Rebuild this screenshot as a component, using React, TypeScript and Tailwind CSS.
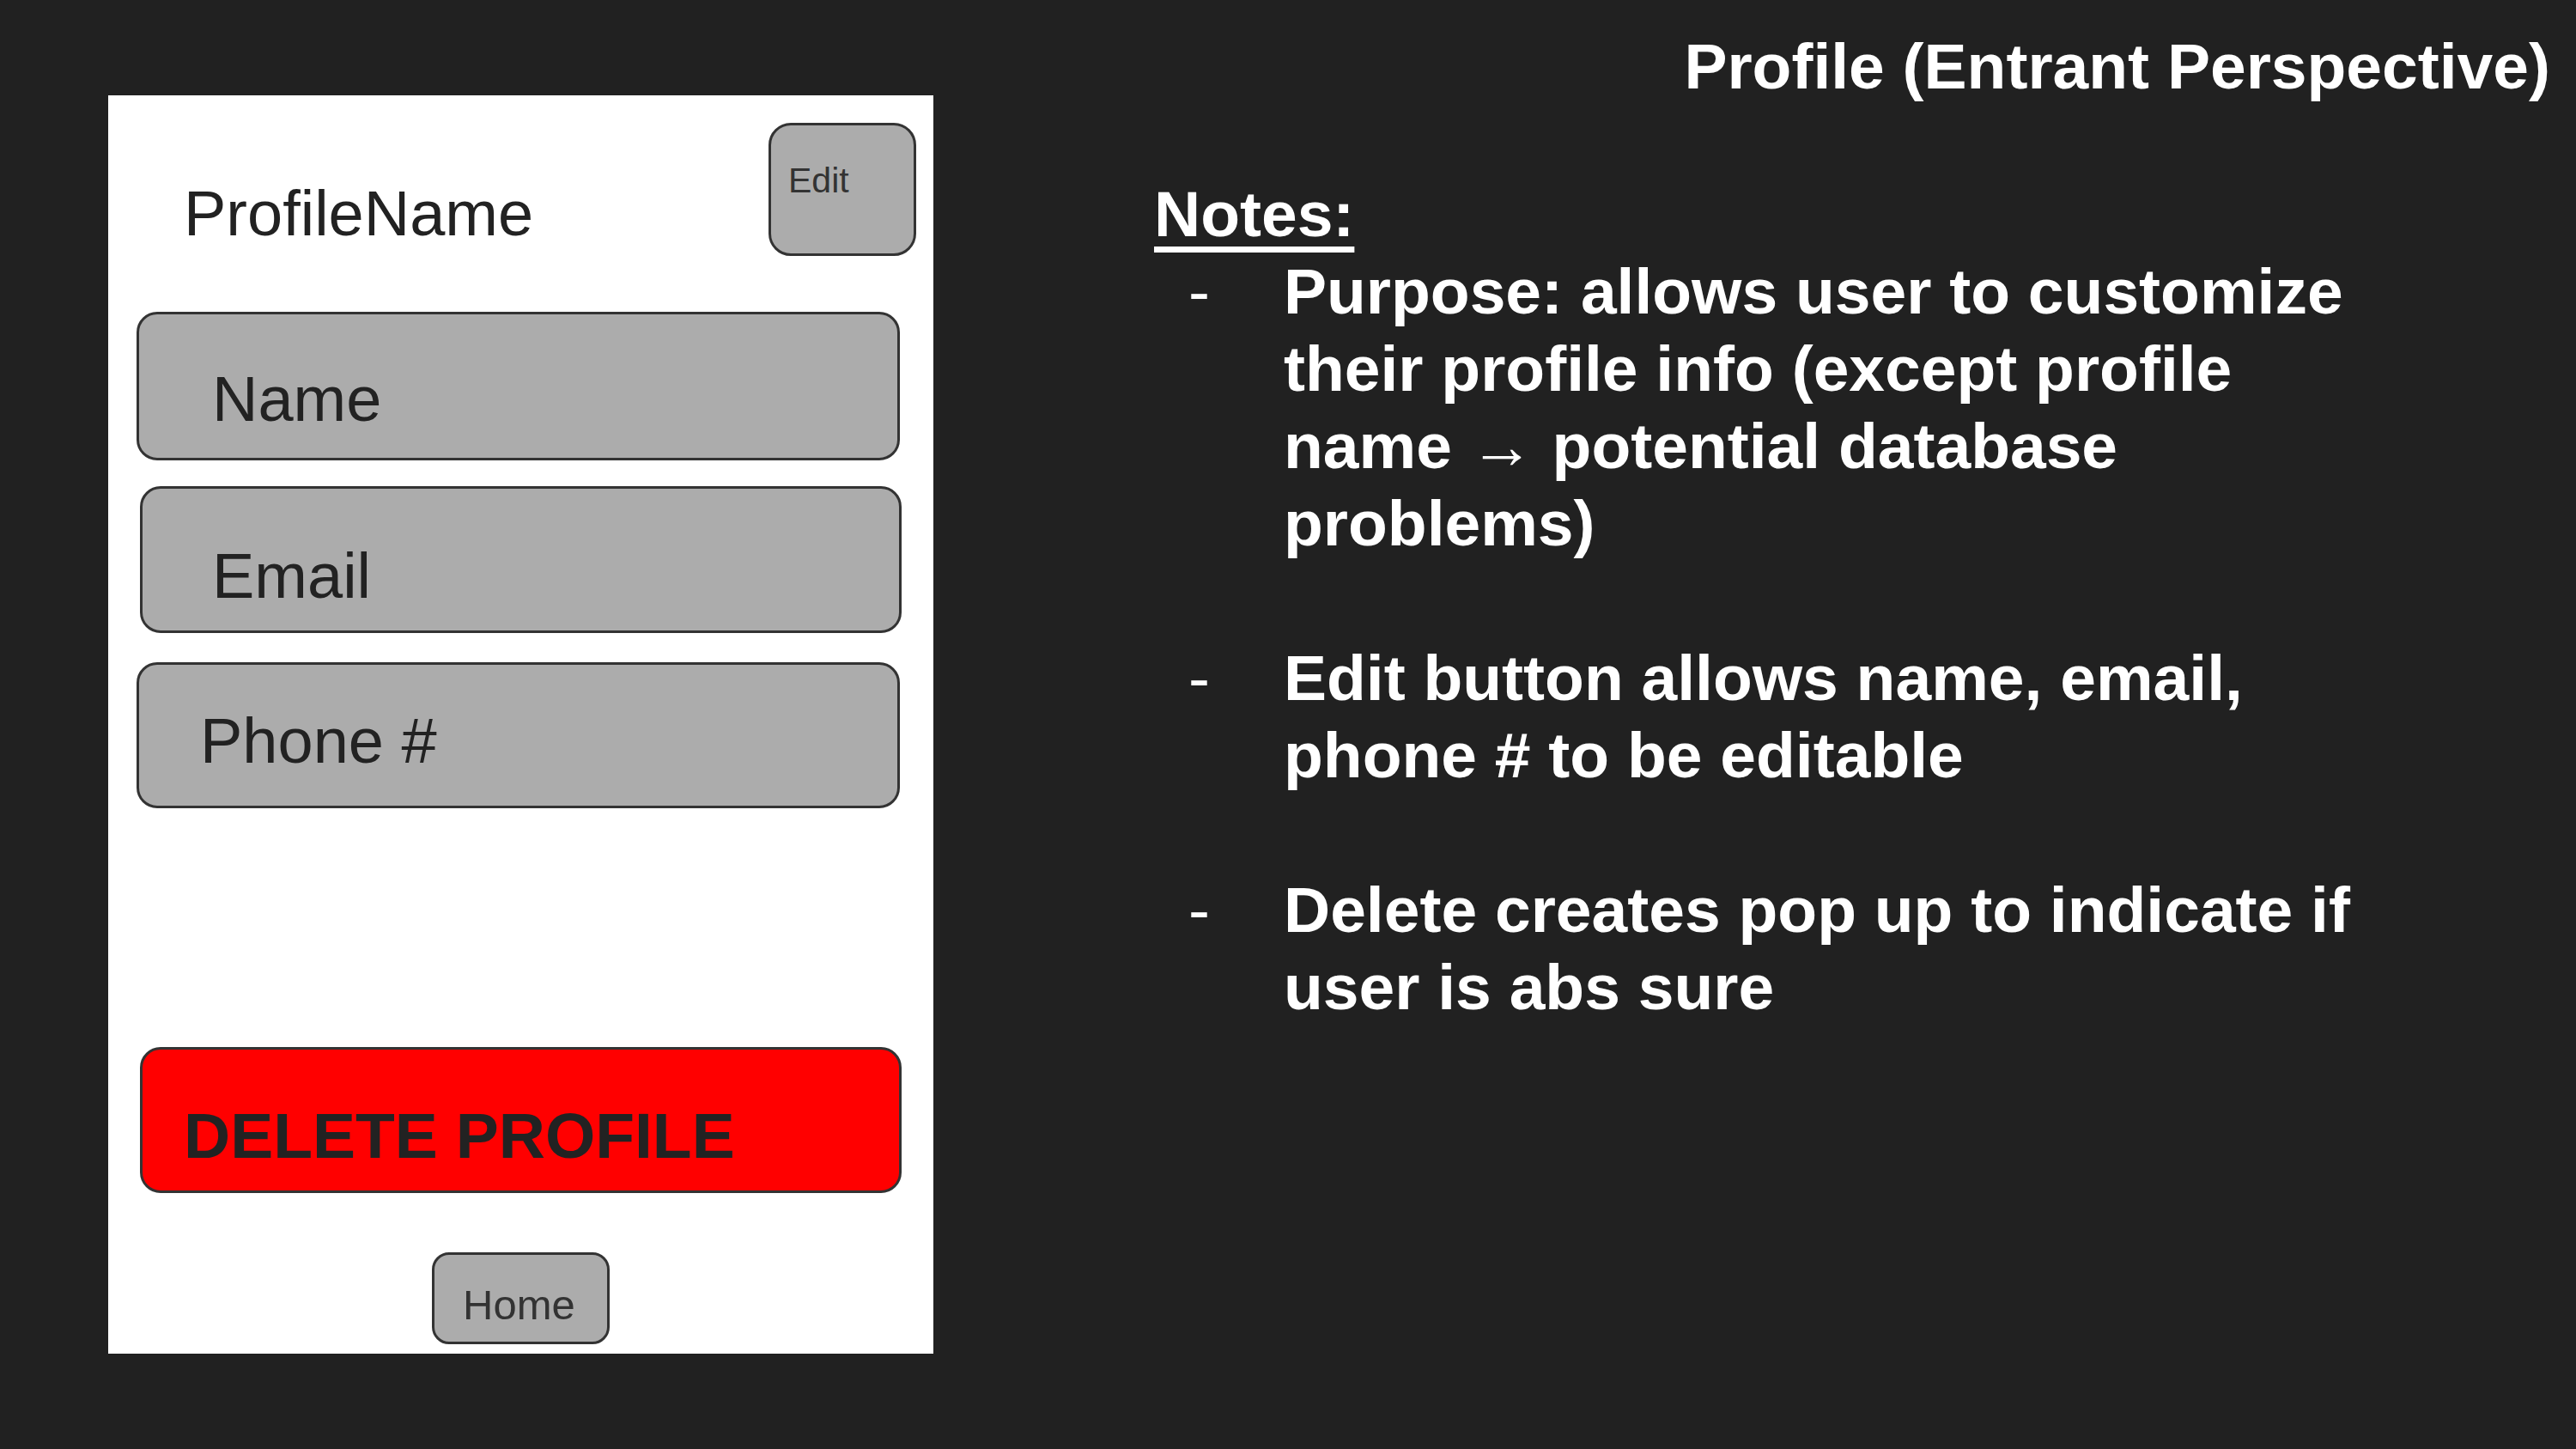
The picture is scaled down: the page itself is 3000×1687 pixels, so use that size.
import React from "react";

const font = { fontFamily: '"Liberation Sans", Arial, Helvetica, sans-serif' };

function Bullet({ lines }: { lines: string[] }) {
  return (
    <div className="flex text-[75px] leading-[90px]">
      <div className="w-[151px] shrink-0 pl-[40px] font-normal">-</div>
      <div className="font-bold">
        {lines.map((l, i) => (
          <div key={i}>{l}</div>
        ))}
      </div>
    </div>
  );
}

export default function App() {
  return (
    <div className="w-[3000px] h-[1687px] bg-[#212121] flex overflow-hidden" style={font}>
      {/* Phone mockup */}
      <div className="ml-[126px] mt-[111px] w-[961px] h-[1465px] bg-white flex flex-col shrink-0 text-[#222222]">
        <div className="flex items-start pt-[32px]">
          <div className="ml-[88px] mt-[69px] text-[74px] leading-[74px]">ProfileName</div>
          <div className="ml-auto mr-[20px] w-[172px] h-[155px] bg-[#acacac] border-[3px] border-[#333333] rounded-[26px] pl-[20px] pt-[44px] text-[41px] leading-[41px] text-[#333333]">
            Edit
          </div>
        </div>
        <div className="mt-[65px] ml-[33px] w-[889px] h-[173px] bg-[#acacac] border-[3px] border-[#333333] rounded-[24px] pl-[85px] pt-[62px] text-[74px] leading-[74px]">
          Name
        </div>
        <div className="mt-[30px] ml-[37px] w-[887px] h-[171px] bg-[#acacac] border-[3px] border-[#333333] rounded-[24px] pl-[81px] pt-[65px] text-[74px] leading-[74px]">
          Email
        </div>
        <div className="mt-[34px] ml-[33px] w-[889px] h-[170px] bg-[#acacac] border-[3px] border-[#333333] rounded-[24px] pl-[71px] pt-[52px] text-[74px] leading-[74px]">
          Phone #
        </div>
        <div className="mt-[278px] ml-[37px] w-[887px] h-[170px] bg-[#ff0000] border-[3px] border-[#333333] rounded-[24px] pl-[48px] pt-[63px] text-[75px] leading-[75px] font-bold">
          DELETE PROFILE
        </div>
        <div className="mt-[69px] self-center w-[207px] h-[107px] bg-[#acacac] border-[3px] border-[#333333] rounded-[20px] pl-[33px] pt-[34px] text-[49px] leading-[49px] text-[#333333]">
          Home
        </div>
      </div>

      {/* Right side notes */}
      <div className="flex-1 flex flex-col text-white">
        <div className="pt-[40px] pr-[30px] text-right text-[75px] leading-[75px] font-bold">
          Profile (Entrant Perspective)
        </div>
        <div className="mt-[89px] ml-[257px] flex flex-col">
          <div className="text-[75px] leading-[90px] font-bold">
            <span className="underline decoration-[7px] underline-offset-[12px]">Notes:</span>
          </div>
          <Bullet
            lines={[
              "Purpose: allows user to customize",
              "their profile info (except profile",
              "name \u2192 potential database",
              "problems)",
            ]}
          />
          <div className="h-[90px]" />
          <Bullet lines={["Edit button allows name, email,", "phone # to be editable"]} />
          <div className="h-[90px]" />
          <Bullet lines={["Delete creates pop up to indicate if", "user is abs sure"]} />
        </div>
      </div>
    </div>
  );
}
